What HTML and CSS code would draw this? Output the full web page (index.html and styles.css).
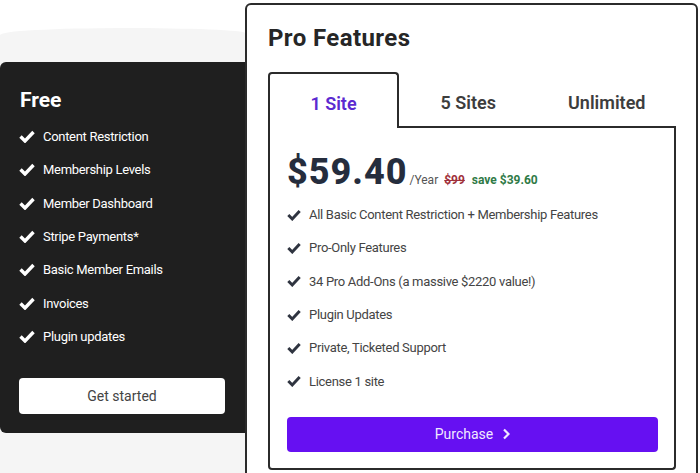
FILE: index.html
```html
<!DOCTYPE html>
<html lang="en">
<head>
<meta charset="utf-8">
<title>Pricing</title>
<link rel="stylesheet" href="styles.css">
</head>
<body>
<div class="page">
  <section class="free-col">
    <div class="free-card">
      <h2 class="free-title">Free</h2>
      <ul class="free-list">
        <li><svg class="chk" viewBox="0 0 16 13"><path d="M1.5 6.5 L6 11 L14.5 2"/></svg>Content Restriction</li>
        <li><svg class="chk" viewBox="0 0 16 13"><path d="M1.5 6.5 L6 11 L14.5 2"/></svg>Membership Levels</li>
        <li><svg class="chk" viewBox="0 0 16 13"><path d="M1.5 6.5 L6 11 L14.5 2"/></svg>Member Dashboard</li>
        <li><svg class="chk" viewBox="0 0 16 13"><path d="M1.5 6.5 L6 11 L14.5 2"/></svg>Stripe Payments*</li>
        <li><svg class="chk" viewBox="0 0 16 13"><path d="M1.5 6.5 L6 11 L14.5 2"/></svg>Basic Member Emails</li>
        <li><svg class="chk" viewBox="0 0 16 13"><path d="M1.5 6.5 L6 11 L14.5 2"/></svg>Invoices</li>
        <li><svg class="chk" viewBox="0 0 16 13"><path d="M1.5 6.5 L6 11 L14.5 2"/></svg>Plugin updates</li>
      </ul>
      <a class="btn-free" href="#">Get started</a>
    </div>
  </section>
  <section class="pro-card">
    <h2 class="pro-title">Pro Features</h2>
    <div class="tabs">
      <div class="tab active">1 Site</div>
      <div class="tab">5 Sites</div>
      <div class="tab">Unlimited</div>
    </div>
    <div class="panel">
      <div class="price-row">
        <span class="price">$59.40</span>
        <span class="per">/Year</span>
        <span class="old">$99</span>
        <span class="save">save $39.60</span>
      </div>
      <ul class="pro-list">
        <li><svg class="chk" viewBox="0 0 16 13"><path d="M1.5 6.5 L6 11 L14.5 2"/></svg>All Basic Content Restriction + Membership Features</li>
        <li><svg class="chk" viewBox="0 0 16 13"><path d="M1.5 6.5 L6 11 L14.5 2"/></svg>Pro-Only Features</li>
        <li><svg class="chk" viewBox="0 0 16 13"><path d="M1.5 6.5 L6 11 L14.5 2"/></svg>34 Pro Add-Ons (a massive $2220 value!)</li>
        <li><svg class="chk" viewBox="0 0 16 13"><path d="M1.5 6.5 L6 11 L14.5 2"/></svg>Plugin Updates</li>
        <li><svg class="chk" viewBox="0 0 16 13"><path d="M1.5 6.5 L6 11 L14.5 2"/></svg>Private, Ticketed Support</li>
        <li><svg class="chk" viewBox="0 0 16 13"><path d="M1.5 6.5 L6 11 L14.5 2"/></svg>License 1 site</li>
      </ul>
      <a class="btn-buy" href="#">Purchase <svg class="chev" viewBox="0 0 8 12"><path d="M2 1.5 L6.5 6 L2 10.5"/></svg></a>
    </div>
  </section>
</div>
</body>
</html>
```
FILE: styles.css
```css
* { box-sizing: border-box; }
html, body { margin: 0; padding: 0; }
body {
  background: #ffffff;
  font-family: Roboto, "Liberation Sans", sans-serif;
  width: 700px;
  height: 473px;
  overflow: hidden;
}
.page {
  display: flex;
  align-items: flex-start;
}
ul { list-style: none; margin: 0; padding: 0; }
h2 { margin: 0; }
a { text-decoration: none; }

/* left column */
.free-col {
  width: 245px;
  flex: none;
  margin-top: 28px;
  height: 445px;
  background: #f5f5f5;
  border-radius: 50% 50% 0 0 / 7px 5px 0 0;
  padding-top: 34px;
}
.free-card {
  background: #1f1f1f;
  border-radius: 6px 0 0 6px;
  padding: 26px 20px 19px 19px;
  display: flex;
  flex-direction: column;
}
.free-title {
  color: #ffffff;
  font-size: 21px;
  line-height: 24px;
  font-weight: 700;
  padding-left: 1px;
  margin-bottom: 8px;
}
.free-list li {
  height: 33.34px;
  display: flex;
  align-items: center;
  color: #ffffff;
  font-size: 13px;
  letter-spacing: -0.3px;
}
.free-list .chk {
  width: 16px;
  height: 13px;
  margin-right: 8px;
  fill: none;
  stroke: #ffffff;
  stroke-width: 3.4;
}
.btn-free {
  margin-top: 25px;
  height: 36px;
  width: 206px;
  background: #ffffff;
  border-radius: 4px;
  color: #444444;
  font-size: 14px;
  display: flex;
  align-items: center;
  justify-content: center;
}

/* pro card */
.pro-card {
  width: 453px;
  flex: none;
  margin-top: 3px;
  border: 2px solid #2b2b2b;
  border-radius: 6px;
  background: #ffffff;
  padding: 19px 20px 24px 21px;
}
.pro-title {
  font-size: 24px;
  line-height: 28px;
  font-weight: 700;
  color: #262626;
  letter-spacing: 0.4px;
  margin-bottom: 20px;
}
.tabs {
  display: grid;
  grid-template-columns: 131px 1fr 1fr;
}
.tab {
  height: 56px;
  display: flex;
  align-items: center;
  justify-content: center;
  padding-top: 6px;
  font-size: 18px;
  font-weight: 600;
  color: #3d3d3d;
  border-bottom: 2px solid #2b2b2b;
}
.tab.active {
  color: #5b2ad0;
  border: 2px solid #2b2b2b;
  border-bottom: none;
  border-radius: 4px 4px 0 0;
  padding-top: 4px;
}
.panel {
  border: 2px solid #2b2b2b;
  border-top: none;
  border-radius: 0 0 4px 4px;
  padding: 26px 16px 16px 17px;
}
.price-row {
  display: flex;
  align-items: baseline;
  height: 36px;
  margin-bottom: 8px;
}
.price {
  font-size: 36px;
  line-height: 36px;
  font-weight: 800;
  color: #252d3d;
  letter-spacing: 1px;
  margin-right: 2px;
}
.per {
  font-size: 12px;
  color: #555555;
  margin-right: 6px;
}
.old {
  font-size: 12px;
  font-weight: 700;
  color: #a0303a;
  text-decoration: line-through;
  margin-right: 7px;
}
.save {
  font-size: 12px;
  font-weight: 700;
  color: #2f7a46;
}
.pro-list li {
  height: 33.34px;
  display: flex;
  align-items: center;
  color: #444444;
  font-size: 13px;
  letter-spacing: -0.3px;
}
.pro-list .chk {
  width: 14px;
  height: 12px;
  margin-right: 8px;
  fill: none;
  stroke: #2f3440;
  stroke-width: 3.4;
}
.btn-buy {
  margin-top: 19px;
  height: 35px;
  background: #6610f2;
  border-radius: 4px;
  color: #f1e9ff;
  font-size: 14px;
  display: flex;
  align-items: center;
  justify-content: center;
  gap: 9px;
}
.chev {
  width: 8px;
  height: 12px;
  fill: none;
  stroke: #f1e9ff;
  stroke-width: 2.2;
}
```
